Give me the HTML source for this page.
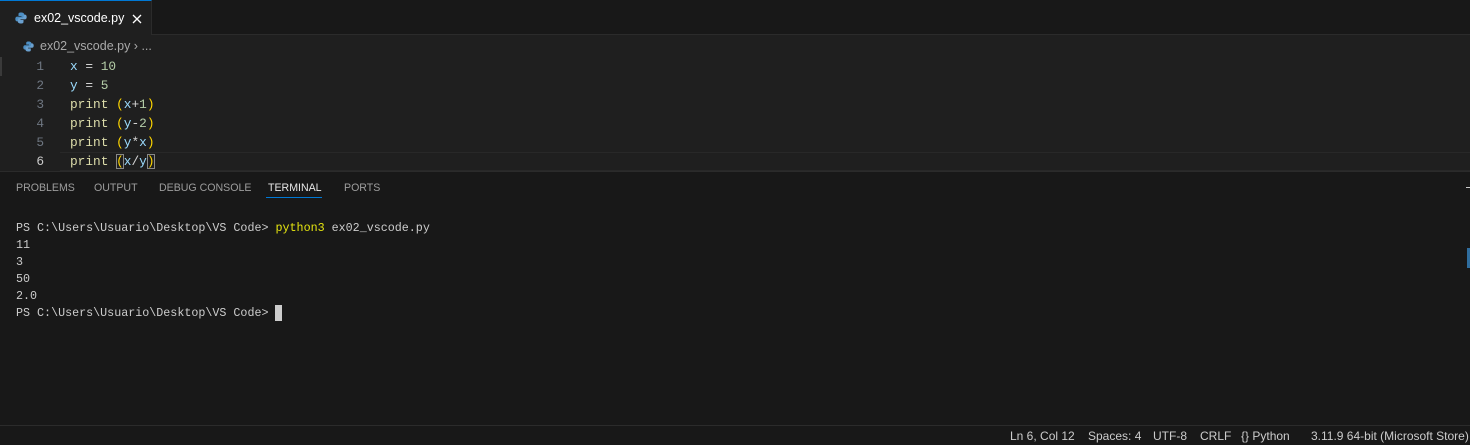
<!DOCTYPE html>
<html><head><meta charset="utf-8"><style>
*{margin:0;padding:0;box-sizing:border-box}
body{width:1470px;height:445px;background:#181818;overflow:hidden;position:relative;font-family:"Liberation Sans",sans-serif}
.abs{position:absolute}
.tabbar{left:0;top:0;width:1470px;height:35px;background:#181818;border-bottom:1px solid #2b2b2b}
.tab{left:0;top:0;width:152px;height:35px;background:#1f1f1f;border-top:1px solid #0078d4;border-right:1px solid #2b2b2b}
.tab span{position:absolute;left:34px;top:10px;color:#fff;font-size:12.5px}
.editor{left:0;top:35px;width:1470px;height:136px;background:#1f1f1f}
.mono{font-family:"Liberation Mono",monospace}
.code{font-size:12.8px;line-height:19px;white-space:pre}
.ln{color:#6e7681;width:44px;text-align:right;left:0}
.term{font-size:11.7px;line-height:17px;white-space:pre;color:#cccccc}
.ptab{top:182px;font-size:10.6px;color:#9d9d9d}
.sb{top:429px;font-size:12px;color:#cccccc}
</style></head><body>
<div class="abs tabbar"></div>
<div class="abs tab">
<svg class="abs" style="left:15px;top:11px" width="12" height="12" viewBox="0 0 12 12"><path d="M6 0.5C3.5 0.5 3.5 1.5 3.5 2.5V4H6.5V4.6H2.2C1 4.6 0.3 5.6 0.3 7S1 9.4 2.2 9.4H3.3V7.8C3.3 6.8 4.1 6 5.1 6H7.7C8.5 6 9.2 5.3 9.2 4.5V2.5C9.2 1.5 8.3 0.5 6 0.5Z" fill="#4d8fc4"/><path d="M6 11.5C8.5 11.5 8.5 10.5 8.5 9.5V8H5.5V7.4H9.8C11 7.4 11.7 6.4 11.7 5S11 2.6 9.8 2.6H8.7V4.2C8.7 5.2 7.9 6 6.9 6H4.3C3.5 6 2.8 6.7 2.8 7.5V9.5C2.8 10.5 3.7 11.5 6 11.5Z" fill="#6aa0cf"/></svg>
<span>ex02_vscode.py</span>
<svg class="abs" style="left:132px;top:13px" width="10" height="10" viewBox="0 0 10 10"><path d="M1 1L9 9M9 1L1 9" stroke="#fff" stroke-width="1.3"/></svg>
</div>
<div class="abs editor"></div>
<svg class="abs" style="left:23px;top:41px" width="11" height="11" viewBox="0 0 12 12"><path d="M6 0.5C3.5 0.5 3.5 1.5 3.5 2.5V4H6.5V4.6H2.2C1 4.6 0.3 5.6 0.3 7S1 9.4 2.2 9.4H3.3V7.8C3.3 6.8 4.1 6 5.1 6H7.7C8.5 6 9.2 5.3 9.2 4.5V2.5C9.2 1.5 8.3 0.5 6 0.5Z" fill="#4d8fc4"/><path d="M6 11.5C8.5 11.5 8.5 10.5 8.5 9.5V8H5.5V7.4H9.8C11 7.4 11.7 6.4 11.7 5S11 2.6 9.8 2.6H8.7V4.2C8.7 5.2 7.9 6 6.9 6H4.3C3.5 6 2.8 6.7 2.8 7.5V9.5C2.8 10.5 3.7 11.5 6 11.5Z" fill="#6aa0cf"/></svg>
<div class="abs" style="left:40px;top:39px;font-size:12.5px;color:#a9a9a9">ex02_vscode.py &#x203A; ...</div>
<div class="abs" style="left:0;top:57px;width:2px;height:19px;background:#3a3a3a"></div>
<div class="abs" style="left:60px;top:152px;width:1410px;height:19px;border-top:1px solid #282828;border-bottom:1px solid #282828"></div>
<div class="abs mono code ln" style="top:57px;">1
2
3
4
5
<span style="color:#cccccc">6</span></div>
<div class="abs mono code" style="left:70px;top:57px;color:#9cdcfe"><span style="color:#9cdcfe">x</span> <span style="color:#d4d4d4">=</span> <span style="color:#b5cea8">10</span>
y <span style="color:#d4d4d4">=</span> <span style="color:#b5cea8">5</span>
<span style="color:#dcdcaa">print</span> <span style="color:#ffd700">(</span>x<span style="color:#d4d4d4">+</span><span style="color:#b5cea8">1</span><span style="color:#ffd700">)</span>
<span style="color:#dcdcaa">print</span> <span style="color:#ffd700">(</span>y<span style="color:#d4d4d4">-</span><span style="color:#b5cea8">2</span><span style="color:#ffd700">)</span>
<span style="color:#dcdcaa">print</span> <span style="color:#ffd700">(</span>y<span style="color:#d4d4d4">*</span>x<span style="color:#ffd700">)</span>
<span style="color:#dcdcaa">print</span> <span style="color:#ffd700;outline:1px solid #888;outline-offset:-1px">(</span>x<span style="color:#d4d4d4">/</span>y<span style="color:#ffd700;outline:1px solid #888;outline-offset:-1px">)</span></div>
<div class="abs" style="left:0;top:171px;width:1470px;height:1px;background:#2b2b2b"></div>
<div class="abs ptab" style="left:16px">PROBLEMS</div>
<div class="abs ptab" style="left:94px">OUTPUT</div>
<div class="abs ptab" style="left:159px">DEBUG CONSOLE</div>
<div class="abs ptab" style="left:268px;color:#e7e7e7">TERMINAL</div>
<div class="abs ptab" style="left:344px">PORTS</div>
<div class="abs" style="left:266px;top:197px;width:56px;height:1px;background:#0078d4"></div>
<div class="abs mono term" style="left:16px;top:220px">PS C:\Users\Usuario\Desktop\VS Code&gt; <span style="color:#e5e510">python3</span> ex02_vscode.py
11
3
50
2.0
PS C:\Users\Usuario\Desktop\VS Code&gt; </div>
<div class="abs" style="left:275px;top:305px;width:7px;height:16px;background:#cccccc"></div>
<div class="abs" style="left:1466px;top:187px;width:4px;height:1px;background:#ccc"></div>
<div class="abs" style="left:1467px;top:248px;width:3px;height:20px;background:#2f6d9e"></div>
<div class="abs" style="left:0;top:425px;width:1470px;height:1px;background:#2b2b2b"></div>
<div class="abs sb" style="left:1010px">Ln 6, Col 12</div>
<div class="abs sb" style="left:1088px">Spaces: 4</div>
<div class="abs sb" style="left:1153px">UTF-8</div>
<div class="abs sb" style="left:1200px">CRLF</div>
<div class="abs sb" style="left:1241px">{} Python</div>
<div class="abs sb" style="left:1311px">3.11.9 64-bit (Microsoft Store)</div>
</body></html>
